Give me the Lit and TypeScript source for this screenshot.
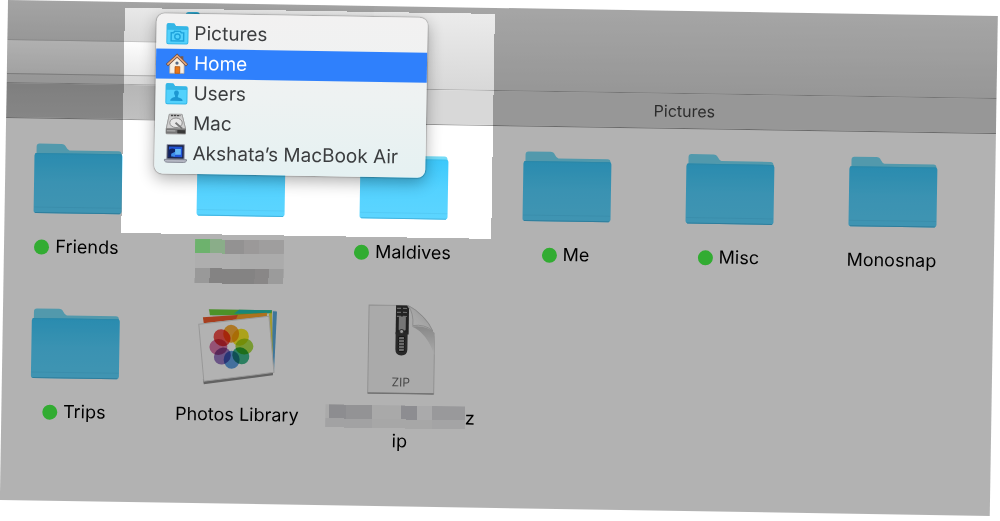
import { LitElement, html, css, svg } from "lit";
import { customElement, state } from "lit/decorators.js";

type Block = [number, number, number, number, string];

interface Item {
  kind: "folder" | "photos" | "zip";
  name?: string;
  tagged?: boolean;
  blocks?: Block[];
  size?: [number, number];
  tail?: [string, string];
}

const HIDDEN_NAME: Block[] = [
  [0, 2, 15, 14, "#9dff9d"], [15, 2, 15, 14, "#c6f8c4"], [30, 2, 19, 14, "#d3d1d1"],
  [49, 2, 15, 14, "#dedcdc"], [64, 2, 25, 14, "#e4e3e3"],
  [0, 16, 45, 15, "#fafafa"], [45, 16, 44, 15, "#f5f5f5"],
  [0, 31, 15, 15, "#dcdcdc"], [15, 31, 45, 15, "#bebcbc"], [60, 31, 14, 15, "#c4c2c2"],
  [74, 31, 15, 15, "#dedede"],
];

const HIDDEN_ZIP: Block[] = [
  [0, 0, 4, 14, "#f4f4f4"], [4, 0, 17, 14, "#cbcbce"], [21, 0, 26, 14, "#d3d3d6"],
  [47, 0, 29, 14, "#f2f2f3"], [76, 0, 16, 14, "#cbcbd0"], [92, 0, 15, 14, "#f4f4f5"],
  [107, 0, 33, 14, "#dcdcdf"],
  [0, 14, 47, 9, "#e9e9ea"], [47, 14, 60, 9, "#efeff0"], [107, 14, 33, 9, "#ebebec"],
];

const ITEMS: Item[] = [
  { kind: "folder", name: "Friends", tagged: true },
  { kind: "folder", blocks: HIDDEN_NAME, size: [89, 48] },
  { kind: "folder", name: "Maldives", tagged: true },
  { kind: "folder", name: "Me", tagged: true },
  { kind: "folder", name: "Misc", tagged: true },
  { kind: "folder", name: "Monosnap" },
  { kind: "folder", name: "Trips", tagged: true },
  { kind: "photos", name: "Photos Library" },
  { kind: "zip", blocks: HIDDEN_ZIP, size: [140, 24], tail: ["z", "ip"] },
];

const folder = html`<svg class="art" viewBox="0 0 90 90" aria-hidden="true">
  <defs>
    <linearGradient id="f" x1="0" y1="0" x2="0" y2="1">
      <stop offset="0" stop-color="#3cc8fb" /><stop offset=".5" stop-color="#54d2ff" /><stop offset="1" stop-color="#5cd5ff" />
    </linearGradient>
  </defs>
  <path d="M3 24V13Q3 10 6 10H28Q31 10 32.500 13T36 16.500H85Q88 16.500 88 19.500V24Z" fill="#76dcf7" />
  <path d="M1 22Q1 19.500 3.500 19.500H86.500Q89 19.500 89 22V77Q89 79.500 86.500 79.500H3.500Q1 79.500 1 77Z" fill="url(#f)" />
  <path d="M2 20H88" stroke="#3fc2f0" />
  <path d="M1.500 73.500H88.500" stroke="#54cbf6" />
  <path d="M2.500 79H87.500" stroke="#43b4e0" />
</svg>`;

const PETALS = ["#f9a01b", "#f6e60a", "#a2d82f", "#26ad7a", "#4a93dd", "#8b67b8", "#d0639c", "#f03c36"];

const photos = html`<svg class="art" viewBox="0 0 90 90" aria-hidden="true">
  <path d="M14 8L82 8L80 72L60 76Z" fill="#e8f1f6" />
  <path d="M15 8L78 8V13L16 14Z" fill="#6fd13a" />
  <path d="M45 8L78 8L76 11L40 12Z" fill="#25bfae" />
  <path d="M79 9H83L81 70L78 54Z" fill="#5aa9dc" />
  <path d="M9 17L76 11L78 68L60 70Z" fill="#f6f6e4" />
  <path d="M9 16L72 11V14L10 22Z" fill="#ef5a2c" />
  <path d="M44 13L73 10.500V14L42 18Z" fill="#f8a42c" />
  <path d="M75 11H78L80 66L77 56Z" fill="#e9dc45" />
  <path d="M10 78L80 68V73L11 83Z" fill="#8d8d8d" />
  <path d="M5 23L75 14L81 70L11 80Z" fill="#ffffff" stroke="#dadada" />
  ${PETALS.map(
    (c, i) => svg`<ellipse cx="38" cy="32" rx="8" ry="9" fill=${c} fill-opacity=".88"
      transform="rotate(${i * 45 - 2} 38 45)" style="mix-blend-mode:multiply" />`
  )}
  <circle cx="38" cy="45" r="2" fill="#fff" />
</svg>`;

const zip = html`<svg class="art" viewBox="0 0 90 90" aria-hidden="true">
  <defs>
    <linearGradient id="curl" x1="0" y1="1" x2="1" y2="0">
      <stop offset="0" stop-color="#fbfbfb" /><stop offset=".4" stop-color="#f0f0f0" /><stop offset="1" stop-color="#d0d0d0" />
    </linearGradient>
    <linearGradient id="shade" x1="0" y1="0" x2="0" y2="1">
      <stop offset="0" stop-color="#c4c4c4" /><stop offset="1" stop-color="#f4f4f4" />
    </linearGradient>
  </defs>
  <path d="M12 1H50Q58 4 68 14Q78 25 78 38V89H12Z" fill="#f4f4f4" stroke="#d0d0d0" />
  <path d="M55 22Q70 20 78 28V50Q70 28 55 22Z" fill="url(#shade)" />
  <path d="M51 1Q57 9 56 21Q68 19 76 26Q73 19 66 12Q58 4 51 1Z" fill="url(#curl)" stroke="#c0c0c0" stroke-width=".8" />
  <path d="M12 89H78" stroke="#a4a4a4" stroke-width="1.500" />
  <path d="M39 1H50L52 4V30H39Z" fill="#333" />
  <path d="M40 4H51M40 8H51M40 12H51" stroke="#999" stroke-width="1.200" stroke-dasharray="4 2" />
  <rect x="42" y="12" width="7" height="14" rx="1" fill="#aaa" />
  <path d="M39 28H51V45Q51 51 45 51Q39 51 39 45Z" fill="#3b3b3b" />
  <circle cx="45" cy="27" r="2" fill="#ddd" stroke="#444" />
  <rect x="42" y="32" width="6" height="15" rx="1" fill="#999" stroke="#222" />
  <path d="M42 35H48M42 38H48M42 41H48M42 44H48" stroke="#444" />
  <text x="45" y="82" text-anchor="middle" font-family="Inter, sans-serif" font-size="12" fill="#686868">ZIP</text>
</svg>`;

const ART = { folder, photos, zip };

const smallFolder = (glyph: unknown) => svg`
  <path d="M1 3Q1 1 3 1H9L11 4H22Q24 4 24 6V21Q24 23 22 23H3Q1 23 1 21Z" fill="#34b6e6" />
  <path d="M2 8H23V21Q23 22 22 22H3Q2 22 2 21Z" fill="#53d1fc" />
  ${glyph}`;

const PLACES = [
  {
    name: "Pictures",
    icon: smallFolder(svg`<g fill="none" stroke="#1ea3dc" stroke-width="1.500">
      <path d="M6 11H8.500L9.500 9.500H15.500L16.500 11H19V19.500H6Z" /><circle cx="12.500" cy="15" r="2.800" />
    </g>`),
  },
  {
    name: "Home",
    icon: svg`<path d="M16 4H19V9H16Z" fill="#7d5a48" />
      <path d="M5 12L12.500 5L20 12V22H5Z" fill="#f7efe4" stroke="#b9a48f" stroke-width=".7" />
      <path d="M2 13.500L12.500 3.500L23 13.500" fill="none" stroke="#6f4b3c" stroke-width="3.200" />
      <path d="M2.500 13L12.500 3.500L22.500 13" fill="none" stroke="#e0a57c" stroke-width="1.800" />
      <circle cx="12.500" cy="11.300" r="1.700" fill="#5a6b85" />
      <rect x="10.500" y="15" width="5" height="7" fill="#e87718" stroke="#a54a0c" stroke-width=".7" />`,
  },
  {
    name: "Users",
    icon: smallFolder(svg`<path fill="#1c98d2" d="M12.500 8.500C15 8.500 15.500 11 14.500 13Q13.500 14.500 14 15.500Q19 16.500 19 19.500H6Q6 16.500 11 15.500Q11.500 14.500 10.500 13C9.500 11 10 8.500 12.500 8.500Z" />`),
  },
  {
    name: "Mac",
    icon: svg`<path d="M5 2H19L23 17V22Q23 23 22 23H3Q2 23 2 22V17Z" fill="#9b9b9b" />
      <path d="M5.500 2H18.500L22.500 17H2.500Z" fill="#cfcfcf" stroke="#8d8d8d" stroke-width=".6" />
      <path d="M7 3.500H17" stroke="#444" stroke-width="1.500" stroke-dasharray="2.500 .7" />
      <ellipse cx="12.500" cy="11" rx="6.500" ry="5" fill="#e6e6e6" stroke="#8a8a8a" />
      <path d="M12 11L19 17" stroke="#777" stroke-width="2" />
      <path d="M2 17H23V22H2Z" fill="#777" /><path d="M3 19.500H12" stroke="#bbb" />
      <path d="M14 18.500H22V22H14Z" fill="#383838" />`,
  },
  {
    name: "Akshata’s MacBook Air",
    icon: svg`<path d="M3.500 2.500H21.500V17.500H3.500Z" fill="#1c2344" stroke="#9599aa" />
      <path d="M5.500 4.500H19.500V15.500H5.500Z" fill="#2054d6" />
      <path d="M5.500 15.500V8Q10 5 14 9L10 15.500Z" fill="#102264" />
      <path d="M12 7H18V13H12Z" fill="#63b8f5" /><path d="M8 12L12 10V15H8Z" fill="#3d8dea" />
      <path d="M1 18H24V19.500Q23 21 21 21H4Q2 21 1 19.500Z" fill="#b4b7c3" stroke="#686b79" stroke-width=".7" />`,
  },
];

@customElement("app-root")
export class AppRoot extends LitElement {
  @state() private current = "Home";

  static styles = css`
    :host {
      display: block;
      background: #fff;
      overflow: hidden;
      font-family: Inter, "Liberation Sans", sans-serif;
      font-size: 18px;
      line-height: 24px;
      color: #000;
      padding: 0 2px 20px 8px;
    }
    .window {
      position: relative;
      background: #fff;
      overflow: hidden;
      transform: rotate(0.93deg);
      transform-origin: 0 0;
    }
    button {
      font: inherit;
      color: inherit;
      border: 0;
      margin: 0;
      padding: 0;
      background: none;
    }
    .toolbar {
      display: grid;
      grid-template-columns: 37% 1fr;
      grid-template-rows: 39px 35px 8px;
      background: linear-gradient(#ededed, #d8d8d8);
      border-bottom: 1px solid #a8a8a8;
    }
    .title {
      padding: 9px 0 0 178px;
      background: linear-gradient(#ebebeb, #d9d9d9);
    }
    .proxy {
      display: block;
      width: 14px;
      height: 12px;
      border-radius: 3px;
      background: #2fa8cf;
    }
    .strip {
      grid-column: 1;
      background: linear-gradient(#fdfdfd, #e8e8e8);
      border-top: 1px solid #c4c4c4;
      border-bottom: 1px solid #b0b0b0;
      box-sizing: border-box;
    }
    .tabs {
      display: flex;
      height: 34px;
      border-bottom: 1px solid #999;
    }
    .tab {
      flex: 0 0 37%;
      background: linear-gradient(#b6b6b6, #c0c0c0);
    }
    .tab.active {
      flex: 1;
      background: #d8d8d8;
      color: #404040;
      font-size: 16px;
    }
    .grid {
      display: grid;
      grid-template-columns: repeat(6, 1fr);
      gap: 16px 18px;
      padding: 15px 30px 53px 0;
    }
    .item {
      display: flex;
      flex-direction: column;
      align-items: center;
      gap: 11px;
      min-width: 0;
    }
    .art {
      width: 90px;
      height: 90px;
    }
    .label {
      min-height: 48px;
      text-align: center;
      white-space: nowrap;
    }
    .line {
      display: flex;
      align-items: center;
      justify-content: center;
      gap: 6px;
    }
    .line.tight {
      gap: 0;
    }
    .dot {
      width: 15px;
      height: 15px;
      border-radius: 50%;
      background: #48f648;
    }
    .blocks {
      display: block;
    }
    .spotlight {
      position: absolute;
      left: 117px;
      top: 6px;
      width: 370px;
      height: 225px;
      box-shadow: 0 0 0 2000px rgba(0, 0, 0, 0.3);
      pointer-events: none;
    }
    .menu {
      position: absolute;
      left: 149px;
      top: 11px;
      width: 271px;
      box-sizing: border-box;
      padding: 5px 0;
      border-radius: 8px;
      background: linear-gradient(#f2f1f1, #eef2f2 50%, #e5f1f2);
      box-shadow: 0 0 1px 1px rgba(0, 0, 0, 0.2), 0 5px 16px rgba(0, 0, 0, 0.32);
      font-size: 19px;
      color: #3b3d3f;
    }
    .place {
      display: flex;
      align-items: center;
      gap: 5px;
      width: 100%;
      height: 30px;
      padding: 0 9px;
      text-align: left;
      white-space: nowrap;
    }
    .place.on {
      background: #2f80fc;
      color: #fff;
    }
    .glyph {
      width: 24px;
      height: 24px;
      flex: none;
    }
  `;

  private renderBlocks(item: Item) {
    const [w, h] = item.size!;
    return html`<svg class="blocks" width=${w} height=${h} shape-rendering="crispEdges" aria-hidden="true">
      ${item.blocks!.map(([x, y, bw, bh, c]) => svg`<rect x=${x} y=${y} width=${bw} height=${bh} fill=${c} />`)}
    </svg>`;
  }

  private renderLabel(item: Item) {
    if (item.blocks) {
      return html`<div class="line tight">${this.renderBlocks(item)}${item.tail ? html`<span>${item.tail[0]}</span>` : null}</div>
        ${item.tail ? html`<div class="line">${item.tail[1]}</div>` : null}`;
    }
    return html`<div class="line">${item.tagged ? html`<span class="dot"></span>` : null}<span>${item.name}</span></div>`;
  }

  render() {
    return html`<main class="window">
      <header class="toolbar">
        <div class="title"><span class="proxy"></span></div>
        <div class="strip"></div>
      </header>
      <nav class="tabs">
        <button class="tab" aria-label="Other tab"></button>
        <button class="tab active">Pictures</button>
      </nav>
      <section class="grid">
        ${ITEMS.map(
          (item) => html`<div class="item">
            ${ART[item.kind]}
            <div class="label">${this.renderLabel(item)}</div>
          </div>`
        )}
      </section>
      <div class="spotlight"></div>
      <div class="menu" role="menu">
        ${PLACES.map(
          (p) => html`<button
            class="place ${p.name === this.current ? "on" : ""}"
            role="menuitem"
            @click=${() => (this.current = p.name)}
          >
            <svg class="glyph" viewBox="0 0 25 24" aria-hidden="true">${p.icon}</svg><span>${p.name}</span>
          </button>`
        )}
      </div>
    </main>`;
  }
}
